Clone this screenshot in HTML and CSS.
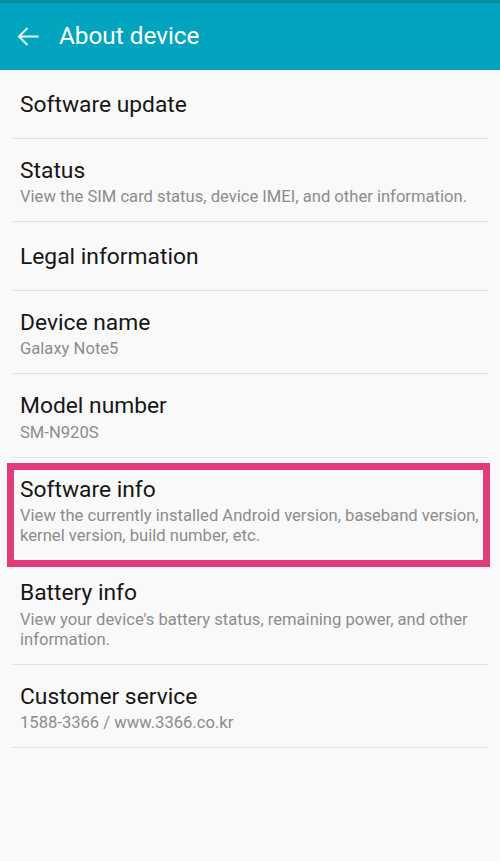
FILE: index.html
```html
<!DOCTYPE html>
<html lang="en">
<head>
<meta charset="utf-8">
<title>About device</title>
<link rel="stylesheet" href="styles.css">
</head>
<body>
<div class="screen">
  <header class="appbar">
    <svg class="back" width="24" height="24" viewBox="0 0 24 24" aria-hidden="true">
      <path d="M2 12.5H21.5M10.5 4L2 12.5L10.5 21" fill="none" stroke="#dff6fa" stroke-width="2.1" stroke-linecap="butt" stroke-linejoin="miter"/>
    </svg>
    <h1 class="appbar-title">About device</h1>
  </header>
  <ul class="list">
    <li class="item single"><div class="title">Software update</div></li>
    <li class="item"><div class="title">Status</div><div class="sub">View the SIM card status, device IMEI, and other information.</div></li>
    <li class="item single"><div class="title">Legal information</div></li>
    <li class="item"><div class="title">Device name</div><div class="sub">Galaxy Note5</div></li>
    <li class="item"><div class="title">Model number</div><div class="sub">SM-N920S</div></li>
    <li class="item highlighted"><div class="title">Software info</div><div class="sub">View the currently installed Android version, baseband version, kernel version, build number, etc.</div><div class="mark"></div></li>
    <li class="item"><div class="title">Battery info</div><div class="sub">View your device's battery status, remaining power, and other information.</div></li>
    <li class="item"><div class="title">Customer service</div><div class="sub">1588-3366 / www.3366.co.kr</div></li>
  </ul>
</div>
</body>
</html>
```
FILE: styles.css
```css
html, body {
  margin: 0;
  padding: 0;
}
body {
  background: #f9f9f9;
  font-family: Roboto, "Noto Sans", sans-serif;
  width: 500px;
  height: 861px;
  overflow: hidden;
}
.screen {
  display: flex;
  flex-direction: column;
}
.appbar {
  height: 66px;
  border-top: 3px solid #0b8ba1;
  border-bottom: 1px solid #0a98b0;
  background: #03a4bf;
  display: flex;
  align-items: center;
  box-sizing: content-box;
}
.back {
  margin-left: 17px;
  width: 24px;
  height: 24px;
}
.appbar-title {
  margin: 0 0 0 18px;
  font-size: 24.3px;
  font-weight: 400;
  color: #ffffff;
  line-height: 28px;
}
.list {
  list-style: none;
  margin: 0;
  padding: 0;
}
.item {
  margin: 0 12px;
  padding: 19px 0 14px 8px;
  border-bottom: 1px solid #e1e1e1;
  display: flex;
  flex-direction: column;
  gap: 3.5px;
  position: relative;
}
.item.single {
  padding-top: 22px;
  padding-bottom: 19.5px;
}
.title {
  font-size: 22.8px;
  line-height: 26px;
  color: #161616;
}
.sub {
  font-size: 16.6px;
  line-height: 20px;
  color: #8c8c8c;
}
.mark {
  position: absolute;
  left: -5px;
  right: -2px;
  top: 5.5px;
  bottom: -6.5px;
  border: 7px solid #e23b7c;
  pointer-events: none;
}
```
